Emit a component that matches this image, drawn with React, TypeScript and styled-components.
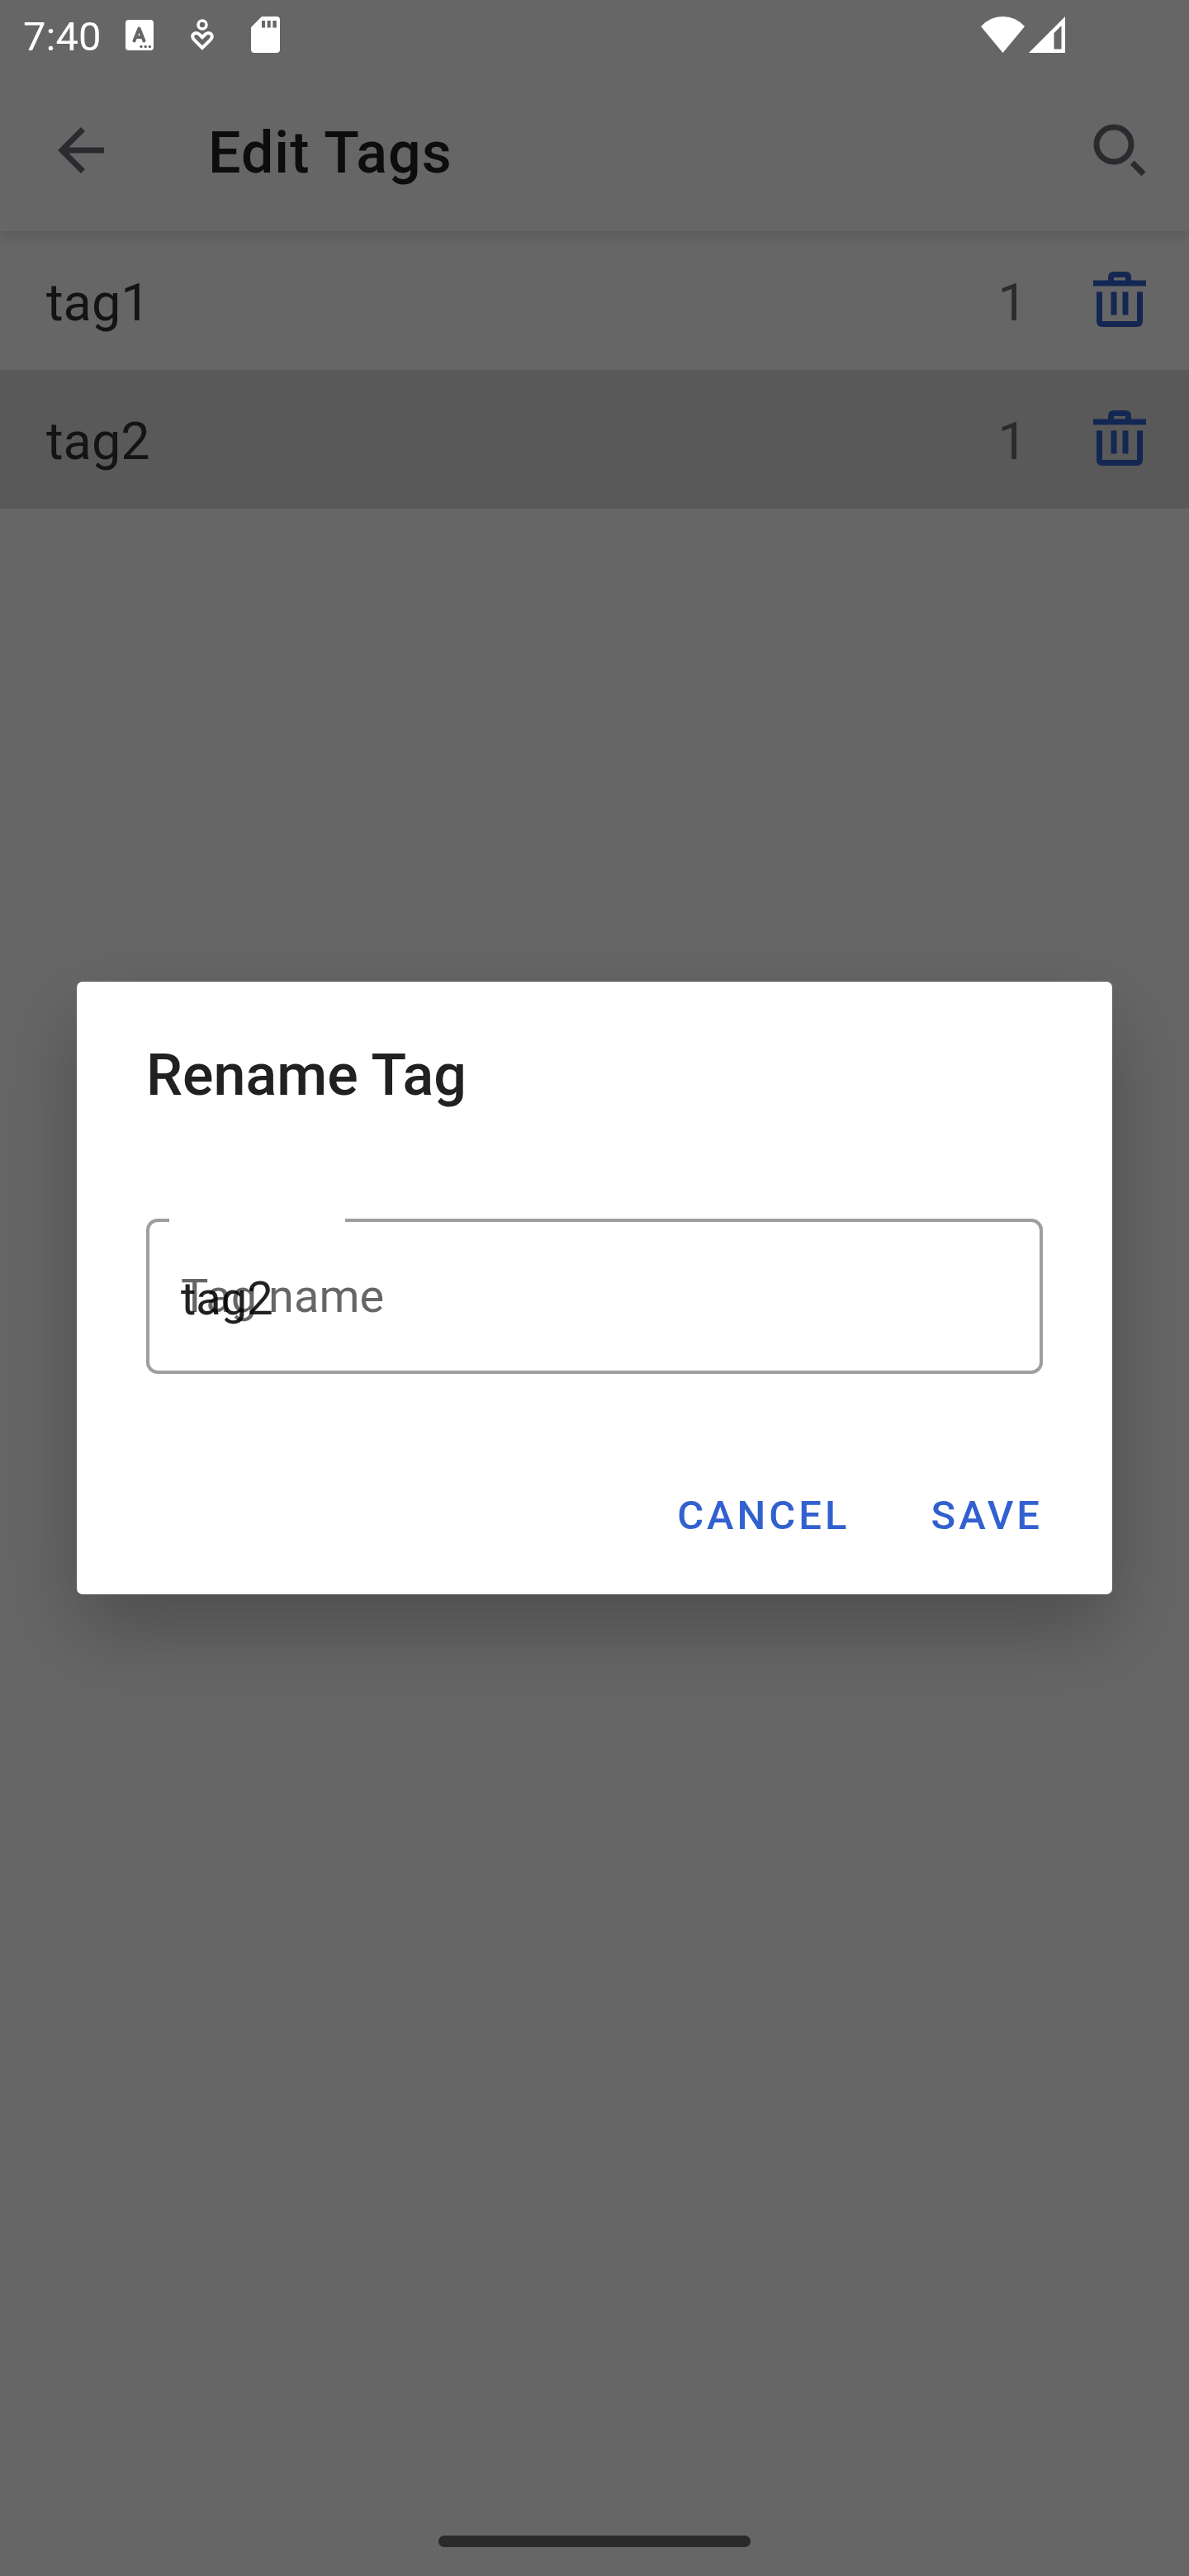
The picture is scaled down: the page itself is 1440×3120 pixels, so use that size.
import React, { useState } from "react";
import styled, { createGlobalStyle } from "styled-components";

const color = {
  primary: "#3261cf",
  text: "#212121",
  rowText: "#303338",
  icon: "#696b75",
  outline: "#9e9e9e",
  white: "#ffffff",
  statusCutout: "#666666",
};

const GlobalStyle = createGlobalStyle`
  *, *::before, *::after { box-sizing: border-box; }
  body {
    margin: 0;
    background: #ffffff;
    font-family: Roboto, "Noto Sans", "Liberation Sans", sans-serif;
    -webkit-font-smoothing: antialiased;
  }
  button, input { font: inherit; }
`;

const Screen = styled.div`
  display: flex;
  flex-direction: column;
  min-height: 100vh;
  background: ${color.white};
`;

const StatusBar = styled.div`
  position: relative;
  z-index: 3;
  display: flex;
  justify-content: space-between;
  align-items: center;
  height: 84px;
  padding: 0 150px 0 28px;
  color: ${color.white};
`;

const StatusGroup = styled.div<{ $gap: number }>`
  display: flex;
  align-items: center;
  gap: ${({ $gap }) => $gap}px;
`;

const Clock = styled.time`
  padding-top: 6px;
  font-size: 49px;
  line-height: 56px;
`;

const Glyph = styled.svg`
  display: block;
  flex: none;
`;

const AppBar = styled.header`
  display: flex;
  align-items: center;
  height: 196px;
  padding: 0 42px 0 56px;
  background: ${color.white};
  box-shadow: 0 4px 18px rgba(0, 0, 0, 0.16);
  clip-path: inset(0 0 -28px 0);
`;

const IconButton = styled.button<{ $color: string }>`
  flex: none;
  width: 84px;
  height: 84px;
  padding: 0;
  border: 0;
  background: none;
  color: ${({ $color }) => $color};
  cursor: pointer;
`;

const ScreenTitle = styled.h1`
  flex: 1;
  margin: 0 0 0 112px;
  padding-top: 6px;
  font-size: 70px;
  font-weight: 500;
  line-height: 82px;
  letter-spacing: 1px;
  color: ${color.text};
`;

const TagList = styled.ul`
  flex: 1;
  margin: 0;
  padding: 0;
  list-style: none;
`;

const TagRow = styled.li<{ $pressed: boolean }>`
  display: flex;
  align-items: center;
  gap: 70px;
  height: 168px;
  padding: 0 42px 0 56px;
  background: ${({ $pressed }) => ($pressed ? "#dfdfdf" : "transparent")};
`;

const TagName = styled.span`
  flex: 1;
  padding-top: 6px;
  font-size: 63px;
  line-height: 74px;
  color: ${color.rowText};
`;

const TagCount = styled.span`
  padding-top: 6px;
  font-size: 63px;
  line-height: 74px;
  color: ${color.icon};
`;

const NavBar = styled.div`
  position: relative;
  z-index: 3;
  display: flex;
  justify-content: center;
  padding-bottom: 35px;
`;

const NavHandle = styled.div`
  width: 378px;
  height: 14px;
  border-radius: 7px;
  background: #2a2a2a;
`;

const Scrim = styled.div`
  position: fixed;
  inset: 0;
  z-index: 2;
  display: flex;
  align-items: center;
  padding: 0 93px;
  background: rgba(0, 0, 0, 0.6);
`;

const Dialog = styled.form`
  flex: 1;
  padding: 72px 84px 33px;
  border-radius: 7px;
  background: ${color.white};
  box-shadow: 0 42px 100px rgba(0, 0, 0, 0.26);
`;

const DialogTitle = styled.h2`
  margin: 0 0 133px;
  font-size: 70px;
  font-weight: 500;
  line-height: 82px;
  color: ${color.text};
`;

const Field = styled.div`
  position: relative;
  display: grid;
  align-items: center;
  height: 188px;
  border: 4px solid ${color.outline};
  border-radius: 14px;
`;

const FieldNotch = styled.span`
  position: absolute;
  top: -4px;
  left: 24px;
  width: 213px;
  height: 4px;
  background: ${color.white};
`;

const FieldInput = styled.input`
  grid-area: 1 / 1;
  width: 100%;
  height: 100%;
  padding: 6px 38px 0;
  border: 0;
  outline: 0;
  background: none;
  font-size: 56px;
  color: ${color.text};
`;

const FieldLabel = styled.label`
  grid-area: 1 / 1;
  z-index: 1;
  padding: 0 38px;
  font-size: 56px;
  line-height: 66px;
  color: rgba(0, 0, 0, 0.6);
  pointer-events: none;
`;

const Actions = styled.div`
  display: flex;
  justify-content: flex-end;
  gap: 42px;
  margin: 108px -28px 0 0;
`;

const TextButton = styled.button`
  height: 126px;
  padding: 0 28px;
  border: 0;
  border-radius: 14px;
  background: none;
  font-size: 49px;
  font-weight: 500;
  letter-spacing: 4px;
  text-transform: uppercase;
  color: ${color.primary};
  cursor: pointer;
`;

const KeyboardGlyph = () => (
  <Glyph width="34" height="37" viewBox="0 0 34 37" aria-hidden="true">
    <rect width="34" height="37" rx="4" fill="currentColor" />
    <path
      d="M10.5 25.5L16.5 10.5L22.5 25.5M12.5 21H20.5"
      fill="none"
      stroke={color.statusCutout}
      strokeWidth="4"
      strokeLinecap="round"
      strokeLinejoin="round"
    />
    <g fill={color.statusCutout}>
      <circle cx="19" cy="32.5" r="1.7" />
      <circle cx="24.2" cy="32.5" r="1.7" />
      <circle cx="29.4" cy="32.5" r="1.7" />
    </g>
  </Glyph>
);

const WellbeingGlyph = () => (
  <Glyph width="28" height="38" viewBox="0 0 28 38" fill="none" stroke="currentColor" aria-hidden="true">
    <circle cx="14" cy="7" r="5" strokeWidth="3.6" />
    <path
      d="M14 35L4.3 25.3C1.5 22.5 1.5 19.5 3.8 18C6.2 16.5 9 17.2 10.8 19L14 22.2L17.2 19C19 17.2 21.8 16.5 24.2 18C26.5 19.5 26.5 22.5 23.7 25.3Z"
      strokeWidth="4"
    />
  </Glyph>
);

const SdCardGlyph = () => (
  <Glyph width="35" height="44" viewBox="0 0 35 44" aria-hidden="true">
    <path
      fill="currentColor"
      fillRule="evenodd"
      d="M13 0H31Q35 0 35 4V40Q35 44 31 44H4Q0 44 0 40V13ZM13 5V13.5H17V5ZM19.7 5V13.5H23.7V5ZM26.4 5V13.5H30.8V5Z"
    />
  </Glyph>
);

const WifiGlyph = () => (
  <Glyph width="53" height="44" viewBox="0 0 53 44" aria-hidden="true">
    <path fill="currentColor" d="M0 12Q11 0 26.5 0T53 12L26.5 44Z" />
  </Glyph>
);

const SignalGlyph = () => (
  <Glyph width="44" height="44" viewBox="0 0 44 44" aria-hidden="true">
    <path fill="currentColor" fillRule="evenodd" d="M44 0V44H0ZM39.5 11L30.5 20V39.5H39.5Z" />
  </Glyph>
);

const BackGlyph = () => (
  <Glyph width="84" height="84" viewBox="0 0 24 24" fill="currentColor" aria-hidden="true">
    <path d="M20 11H7.83l5.59-5.59L12 4l-8 8 8 8 1.41-1.41L7.83 13H20v-2z" />
  </Glyph>
);

const SearchGlyph = () => (
  <Glyph width="84" height="84" viewBox="0 0 84 84" fill="none" stroke="currentColor" strokeWidth="7" aria-hidden="true">
    <circle cx="35" cy="35" r="21" />
    <path d="M57.3 57L71 70.7" />
  </Glyph>
);

const TrashGlyph = () => (
  <Glyph width="84" height="84" viewBox="0 0 84 84" fill="none" stroke="currentColor" strokeWidth="7" aria-hidden="true">
    <path d="M10 21H74M31.5 21V14Q31.5 10.5 35 10.5H49Q52.5 10.5 52.5 14V21" />
    <path d="M17.5 31.5V67Q17.5 70.5 21 70.5H63Q66.5 70.5 66.5 67V31.5" />
    <path d="M35 31.5V59.5M49 31.5V59.5" />
  </Glyph>
);

const tags = [
  { name: "tag1", count: 1 },
  { name: "tag2", count: 1 },
];

export default function App() {
  const [name, setName] = useState("tag2");

  return (
    <>
      <GlobalStyle />
      <Screen>
        <StatusBar>
          <StatusGroup $gap={30}>
            <Clock>7:40</Clock>
            <StatusGroup $gap={45}>
              <KeyboardGlyph />
              <WellbeingGlyph />
              <SdCardGlyph />
            </StatusGroup>
          </StatusGroup>
          <StatusGroup $gap={5}>
            <WifiGlyph />
            <SignalGlyph />
          </StatusGroup>
        </StatusBar>

        <AppBar>
          <IconButton type="button" aria-label="Back" $color={color.icon}>
            <BackGlyph />
          </IconButton>
          <ScreenTitle>Edit Tags</ScreenTitle>
          <IconButton type="button" aria-label="Search" $color={color.icon}>
            <SearchGlyph />
          </IconButton>
        </AppBar>

        <TagList>
          {tags.map((tag) => (
            <TagRow key={tag.name} $pressed={tag.name === "tag2"}>
              <TagName>{tag.name}</TagName>
              <TagCount>{tag.count}</TagCount>
              <IconButton type="button" aria-label={`Delete ${tag.name}`} $color={color.primary}>
                <TrashGlyph />
              </IconButton>
            </TagRow>
          ))}
        </TagList>

        <NavBar>
          <NavHandle />
        </NavBar>
      </Screen>

      <Scrim>
        <Dialog role="dialog" aria-labelledby="rename-title" onSubmit={(e) => e.preventDefault()}>
          <DialogTitle id="rename-title">Rename Tag</DialogTitle>
          <Field>
            <FieldNotch />
            <FieldInput id="tag-name" type="text" value={name} onChange={(e) => setName(e.target.value)} />
            <FieldLabel htmlFor="tag-name">Tag name</FieldLabel>
          </Field>
          <Actions>
            <TextButton type="button">Cancel</TextButton>
            <TextButton type="submit">Save</TextButton>
          </Actions>
        </Dialog>
      </Scrim>
    </>
  );
}
